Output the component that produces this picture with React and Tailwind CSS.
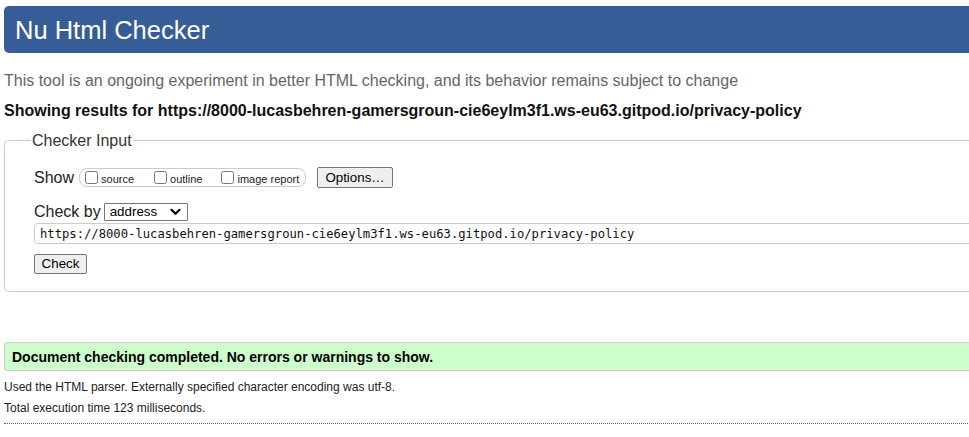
import React from 'react'

const ChevronDown = () => (
    <svg width="11" height="8" viewBox="0 0 11 8" className="mr-[6px]">
        <polyline points="1.5,1.8 5.5,5.8 9.5,1.8" fill="none" stroke="#000" strokeWidth="2.2" strokeLinecap="round" strokeLinejoin="round" />
    </svg>
)

const Opt = ({ label, className = '' }) => (
    <label className={`flex items-center ${className}`}>
        <input type="checkbox" className="w-[13px] h-[13px] m-0 mr-[3px]" />
        <span className="text-[11px] leading-[13px] text-[#222] mt-[3px]">{label}</span>
    </label>
)

export default function App() {
    return (
        <div className="w-[969px] h-[437px] overflow-hidden bg-white font-['Liberation_Sans',Arial,sans-serif] text-[#222]">
            <div className="w-[1100px] pl-1 pt-[6px]">
                {/* page title */}
                <div className="h-[47px] bg-[#365d95] rounded-l-[5px] flex items-center pl-[11px]">
                    <h1 className="text-white text-[25.5px] leading-[30px]">Nu Html Checker</h1>
                </div>

                <p className="mt-[18px] text-[16px] leading-[19px] text-[#666]">
                    This tool is an ongoing experiment in better HTML checking, and its behavior remains subject to change
                </p>
                <p className="mt-[11px] text-[16px] leading-[19px] font-bold text-[#111]">
                    Showing results for https://8000-lucasbehren-gamersgroun-cie6eylm3f1.ws-eu63.gitpod.io/privacy-policy
                </p>

                <fieldset className="mt-[11px] border border-[#ccc] rounded-[5px] pl-[29px] pb-[17px] pt-[17px]">
                    <legend className="text-[16px] leading-[19px] -ml-[3px] px-[1px] text-[#333]">Checker Input</legend>

                    <div className="flex items-center h-[21px]">
                        <span className="text-[16px] leading-[19px]">Show</span>
                        <div className="ml-[5px] w-[227px] h-[19px] border border-[#ccc] rounded-[8px] flex items-center pl-[5px]">
                            <Opt label="source" />
                            <Opt label="outline" className="ml-[20px]" />
                            <Opt label="image report" className="ml-[19px]" />
                        </div>
                        <button className="ml-[11px] w-[76px] h-[21px] bg-[#efefef] border border-[#767676] rounded-[2px] text-[13.33px] leading-[16px] text-black">
                            Options…
                        </button>
                    </div>

                    <div className="flex items-center mt-[14px] h-[19px]">
                        <span className="text-[16px] leading-[19px]">Check by</span>
                        <div className="ml-[3px] w-[84px] h-[18px] border border-[#767676] rounded-[1px] flex items-center justify-between">
                            <span className="text-[13.33px] leading-[16px] pl-[5px] text-black">address</span>
                            <ChevronDown />
                        </div>
                    </div>

                    <div className="mt-[2px] h-[21px] border border-[#ccc] rounded-[4px] flex items-center pl-[5px]">
                        <span className="font-['DejaVu_Sans_Mono',monospace] text-[12.2px] leading-[14px] text-[#111]">
                            https://8000-lucasbehren-gamersgroun-cie6eylm3f1.ws-eu63.gitpod.io/privacy-policy
                        </span>
                    </div>

                    <button className="mt-[10px] w-[53px] h-[20px] bg-[#efefef] border border-[#767676] rounded-[2px] text-[13.33px] leading-[16px] text-black block">
                        Check
                    </button>
                </fieldset>

                {/* result */}
                <div className="mt-[50px] h-[29px] bg-[#ccffcc] border border-[#ccc] rounded-l-[3px] flex items-center pl-[7px]">
                    <span className="text-[14px] leading-[16px] font-bold text-black">
                        Document checking completed. No errors or warnings to show.
                    </span>
                </div>

                <p className="mt-[9px] text-[12px] leading-[14px]">
                    Used the HTML parser. Externally specified character encoding was utf-8.
                </p>
                <p className="mt-[7px] text-[12px] leading-[14px]">Total execution time 123 milliseconds.</p>
                <div className="mt-[8px] border-t border-dotted border-[#666]" />
            </div>
        </div>
    )
}
